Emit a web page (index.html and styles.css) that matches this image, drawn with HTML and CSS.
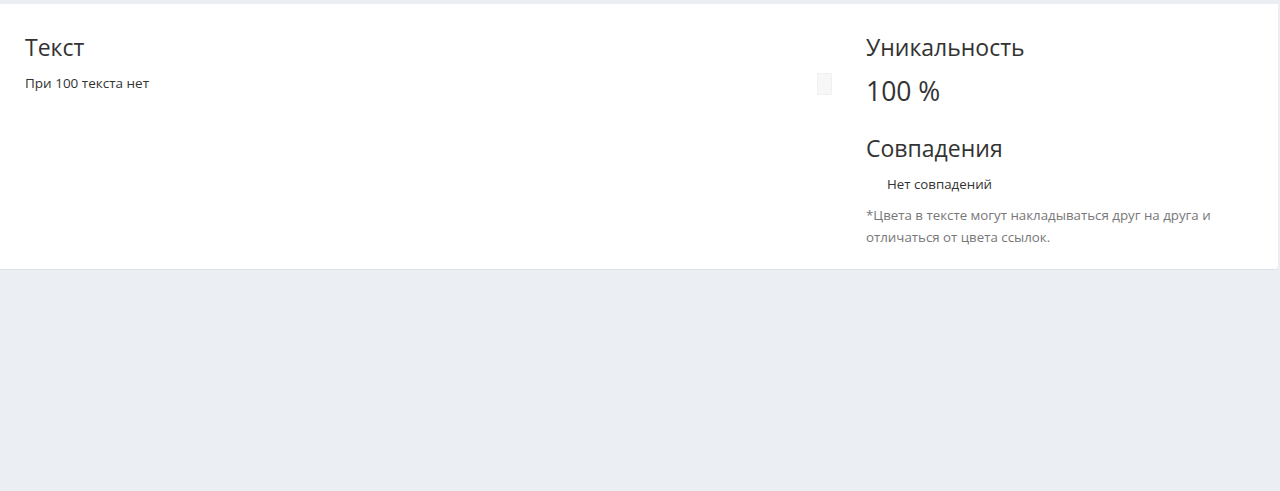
FILE: index.html
```html
<!DOCTYPE html>
<html lang="ru">
<head>
  <meta charset="UTF-8" />
  <title>Проверка уникальности</title>
  <link rel="stylesheet" href="styles.css">
</head>
<body>
  <main class="page">
    <section class="result-card">
      <div class="text-col">
        <h2 class="col-title">Текст</h2>
        <p class="text-body">При 100 текста нет</p>
        <div class="scroll-box"></div>
      </div>

      <div class="info-col">
        <h2 class="col-title">Уникальность</h2>
        <div class="percent">100 %</div>

        <h2 class="col-title matches-title">Совпадения</h2>
        <p class="no-matches">Нет совпадений</p>
        <p class="note">*Цвета в тексте могут накладываться друг на друга и отличаться от цвета ссылок.</p>
      </div>
    </section>
  </main>
</body>
</html>
```

FILE: styles.css
```css
body {
  margin: 0;
  padding: 0;
  background: #ebeef3;
  color: #333;
  font-family: "Open Sans", "Noto Sans", Arial, sans-serif;
}

.page {
  padding-top: 4px;
}

.result-card {
  display: flex;
  background: white;
  border-bottom: 1px solid #dde1e7;
  border-radius: 0 0 4px 0;
  margin-right: 2px;
  padding: 28px 25px 21px 25px;
}

.text-col {
  position: relative;
  flex: 0 0 816px;
}

.info-col {
  flex: 1;
  padding-left: 25px;
}

.col-title {
  margin: 0;
  font-size: 23px;
  font-weight: 400;
  line-height: 30px;
  color: #333;
}

.text-body {
  margin: 12px 0 0;
  font-size: 13.5px;
  line-height: 18px;
  color: #333;
}

.scroll-box {
  position: absolute;
  top: 41px;
  right: 9px;
  width: 15px;
  height: 22px;
  background: #f7f7f7;
  border: 1px solid #f0f0f0;
  box-sizing: border-box;
}

.percent {
  margin-top: 12px;
  font-size: 26.5px;
  line-height: 34px;
}

.matches-title {
  margin-top: 25px;
}

.no-matches {
  margin: 12px 0 0 21px;
  font-size: 13.3px;
  line-height: 18px;
}

.note {
  margin: 11px 0 0;
  max-width: 370px;
  font-size: 13.3px;
  line-height: 22px;
  color: #777;
}
```
